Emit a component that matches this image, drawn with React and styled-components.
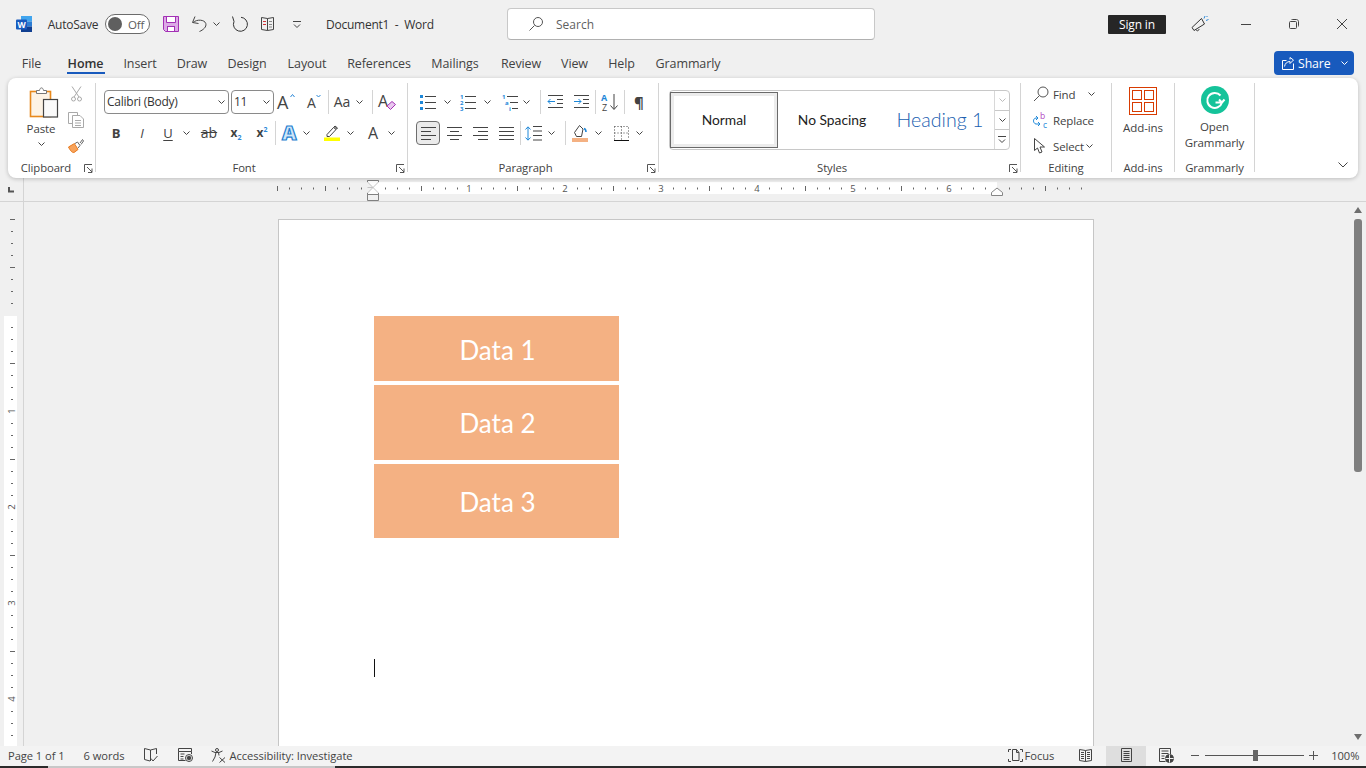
import styled, { createGlobalStyle } from "styled-components";

const GlobalStyle = createGlobalStyle`
  html, body {
    margin: 0;
    padding: 0;
    background: #f0f0f0;
    overflow: hidden;
  }
  * {
    box-sizing: border-box;
  }
  #root {
    font-family: "Open Sans", "Liberation Sans", sans-serif;
    color: #424242;
  }
`;

const Shell = styled.div`
  width: 1366px;
  height: 768px;
  display: flex;
  flex-direction: column;
  overflow: hidden;
  background: #f0f0f0;
`;

/* ---- title bar ---- */
const TitleBar = styled.div`
  height: 48px;
  flex: none;
  display: flex;
  align-items: center;
`;

const Slot = styled.div`
  flex: none;
  display: flex;
  align-items: center;
  justify-content: ${(p) => (p.$start ? "flex-start" : "center")};
  width: ${(p) => (p.$w ? `${p.$w}px` : "auto")};
  margin-left: ${(p) => p.$ml || 0}px;
`;

const BarText = styled.span`
  font-size: 12px;
  letter-spacing: -0.25px;
  white-space: pre;
  color: #333;
`;

const Toggle = styled.div`
  width: 45px;
  height: 20px;
  border: 1px solid #6b6b6b;
  border-radius: 10px;
  background: #fff;
  display: flex;
  align-items: center;
  padding: 0 2px;
  gap: 6px;
  font-size: 11.5px;
  letter-spacing: -0.2px;
  color: #5c5c5c;
  &::before {
    content: "";
    width: 14px;
    height: 14px;
    border-radius: 50%;
    background: #5f5f5f;
  }
`;

const SearchBox = styled.div`
  width: 368px;
  height: 32px;
  flex: none;
  background: #fff;
  border: 1px solid #c8c8c8;
  border-bottom-color: #b0b0b0;
  border-radius: 4px;
  display: flex;
  align-items: center;
  padding-left: 20px;
  gap: 12px;
  font-size: 12px;
  color: #5f5f5f;
`;

const RightCluster = styled.div`
  margin-left: auto;
  display: flex;
  align-items: center;
`;

const SignIn = styled.div`
  width: 58px;
  height: 19px;
  background: #262626;
  color: #fff;
  border-radius: 1px;
  font-size: 12px;
  letter-spacing: -0.15px;
  display: flex;
  align-items: center;
  justify-content: center;
`;

/* ---- tabs ---- */
const TabRow = styled.div`
  height: 30px;
  flex: none;
  display: flex;
  align-items: center;
  padding-left: 22px;
`;

const Tab = styled.div`
  position: relative;
  flex: none;
  height: 24px;
  width: ${(p) => p.$w}px;
  margin-right: ${(p) => p.$gap}px;
  display: flex;
  align-items: center;
  justify-content: center;
  white-space: nowrap;
  font-size: 12.5px;
  letter-spacing: -0.1px;
  color: ${(p) => (p.$active ? "#333" : "#424242")};
  font-weight: ${(p) => (p.$active ? 600 : 400)};
  &::after {
    content: "";
    display: ${(p) => (p.$active ? "block" : "none")};
    position: absolute;
    left: 0;
    right: -1px;
    bottom: 1px;
    height: 2px;
    background: #185abd;
  }
`;

const ShareBtn = styled.div`
  margin-left: auto;
  margin-right: 12px;
  width: 80px;
  height: 24px;
  border-radius: 4px;
  background: #185abd;
  color: #fff;
  font-size: 12.3px;
  display: flex;
  align-items: center;
  padding-left: 8px;
  gap: 4px;
  span {
    letter-spacing: -0.1px;
  }
  svg:last-child {
    margin-left: 6px;
  }
`;

/* ---- ribbon ---- */
const Ribbon = styled.div`
  position: relative;
  z-index: 2;
  flex: none;
  height: 100px;
  margin: 0 8px;
  padding: 5px 0 6px;
  display: flex;
  background: #fff;
  border-radius: 8px;
  box-shadow: 0 1px 4px rgba(0, 0, 0, 0.22);
`;

const Group = styled.div`
  width: ${(p) => p.$w}px;
  flex: none;
  display: flex;
  flex-direction: column;
  border-right: 1px solid #d4d4d4;
`;

const GroupBody = styled.div`
  flex: 1;
  min-height: 0;
  display: flex;
  flex-direction: column;
`;

const ToolRow = styled.div`
  display: flex;
  align-items: center;
  height: 24px;
  margin-top: ${(p) => p.$mt || 0}px;
  padding-left: ${(p) => p.$pl || 0}px;
`;

const Tool = styled.div`
  flex: none;
  width: ${(p) => p.$w}px;
  height: 24px;
  margin-left: ${(p) => p.$ml || 0}px;
  display: flex;
  align-items: center;
  justify-content: center;
  border-radius: 4px;
  border: ${(p) => (p.$on ? "1px solid #6e6e6e" : "none")};
  background: ${(p) => (p.$on ? "#ebebeb" : "transparent")};
`;

const Divider = styled.div`
  flex: none;
  width: 1px;
  height: 24px;
  margin-left: ${(p) => p.$ml || 0}px;
  background: #d4d4d4;
`;

const GroupFoot = styled.div`
  height: 14px;
  margin-bottom: -3px;
  display: flex;
  align-items: center;
`;

const GroupLabel = styled.div`
  flex: 1;
  text-align: center;
  font-size: 11.3px;
  letter-spacing: -0.1px;
  line-height: 14px;
  color: #424242;
  padding-right: ${(p) => p.$pr || 0}px;
`;

const LauncherBox = styled.div`
  flex: none;
  width: 9px;
  height: 9px;
  margin-right: 2px;
  display: flex;
`;

const Combo = styled.div`
  flex: none;
  width: ${(p) => p.$w}px;
  height: 24px;
  margin-left: ${(p) => p.$ml || 0}px;
  border: 1px solid #8a8a8a;
  border-radius: 4px;
  display: flex;
  align-items: center;
  justify-content: space-between;
  padding: 0 3px 1px 2px;
  font-size: 12px;
  letter-spacing: -0.25px;
  color: #333;
  white-space: nowrap;
`;

const Glyph = styled.span`
  font-family: ${(p) => p.$font || "inherit"};
  font-size: ${(p) => p.$size || 12}px;
  font-weight: ${(p) => p.$weight || 400};
  font-style: ${(p) => (p.$italic ? "italic" : "normal")};
  text-decoration: ${(p) => p.$deco || "none"};
  text-underline-offset: 2px;
  color: ${(p) => p.$color || "#424242"};
  line-height: 1;
  white-space: nowrap;
  sub, sup {
    font-size: 7px;
    color: #2b88d8;
    line-height: 0;
  }
`;

const ClipBody = styled.div`
  flex: 1;
  display: flex;
`;

const PasteCol = styled.div`
  width: 58px;
  flex: none;
  display: flex;
  flex-direction: column;
  align-items: center;
  padding: 4px 0 0 8px;
  font-size: 11.5px;
  letter-spacing: -0.1px;
  svg:first-child {
    margin-left: 5px;
  }
  span {
    margin-top: 3px;
    line-height: 16px;
  }
  svg:last-child {
    margin-top: 5px;
  }
`;

const SmallCol = styled.div`
  width: 20px;
  flex: none;
  display: flex;
  flex-direction: column;
  align-items: center;
  gap: 4px;
  div {
    height: 22px;
    display: flex;
    align-items: center;
  }
`;

const Gallery = styled.div`
  width: 341px;
  height: 60px;
  margin: 7px 0 0 10px;
  flex: none;
  display: flex;
  border: 1px solid #c8c8c8;
  border-radius: 4px;
`;

const StyleCell = styled.div`
  width: 108px;
  flex: none;
  height: ${(p) => (p.$on ? "56px" : "58px")};
  margin-top: ${(p) => (p.$on ? "1px" : "0")};
  padding-bottom: 2px;
  display: flex;
  align-items: center;
  justify-content: center;
  font-family: Lato, "Liberation Sans", sans-serif;
  font-size: ${(p) => p.$size || 13.8}px;
  font-weight: ${(p) => p.$weight || 400};
  color: ${(p) => p.$color || "#222"};
  border: ${(p) => (p.$on ? "1px solid #6a6a6a" : "none")};
  box-shadow: ${(p) => (p.$on ? "inset 0 0 0 3px #ececec" : "none")};
  white-space: nowrap;
`;

const GalleryArrows = styled.div`
  flex: 1;
  display: flex;
  flex-direction: column;
  border-left: 1px solid #d8d8d8;
`;

const ArrowCell = styled.div`
  flex: 1;
  display: flex;
  align-items: center;
  justify-content: center;
  & + & {
    border-top: 1px solid #c8c8c8;
  }
`;

const EditList = styled.div`
  display: flex;
  flex-direction: column;
  gap: 4px;
  padding-left: 12px;
`;

const EditRow = styled.div`
  height: 22px;
  display: flex;
  align-items: center;
  font-size: 11.5px;
  letter-spacing: -0.15px;
  span {
    margin-left: ${(p) => p.$gap || 4}px;
    margin-right: ${(p) => p.$after || 0}px;
  }
`;

const BigTool = styled.div`
  display: flex;
  flex-direction: column;
  align-items: center;
  padding-top: ${(p) => p.$pt || 4}px;
  font-size: 11.5px;
  letter-spacing: -0.1px;
  line-height: 16px;
  text-align: center;
  p {
    margin: 5px 0 0;
  }
`;

const Collapse = styled.div`
  margin: auto 10px 4px auto;
  display: flex;
`;

/* ---- rulers ---- */
const RulerRow = styled.div`
  height: 24px;
  flex: none;
  display: flex;
  border-bottom: 1px solid #d4d4d4;
`;

const RulerCorner = styled.div`
  width: 24px;
  flex: none;
  border-right: 1px solid #d4d4d4;
  display: flex;
  padding: 9px 0 0 8px;
`;

const Workspace = styled.div`
  flex: 1;
  min-height: 0;
  display: flex;
`;

const VRuler = styled.div`
  width: 24px;
  flex: none;
  border-right: 1px solid #d4d4d4;
  display: flex;
`;

const Canvas = styled.div`
  flex: 1;
  min-width: 0;
  overflow: hidden;
  display: flex;
  justify-content: center;
  padding-top: 17px;
`;

const Page = styled.div`
  width: 816px;
  height: 1056px;
  flex: none;
  margin-right: 2px;
  background: #fff;
  border: 1px solid #c6c6c6;
  padding: 96px 0 0 95px;
`;

const DataBlock = styled.div`
  width: 245px;
  height: ${(p) => p.$h}px;
  margin-bottom: 4px;
  padding: ${(p) => p.$pt}px 0 0 2px;
  background: #f4b183;
  color: #fff;
  display: flex;
  align-items: center;
  justify-content: center;
  font-family: Lato, "Liberation Sans", sans-serif;
  font-size: 26px;
`;

const Caret = styled.div`
  width: 1px;
  height: 18px;
  margin-top: 121px;
  background: #111;
`;

const ScrollTrack = styled.div`
  width: 16px;
  flex: none;
  display: flex;
  flex-direction: column;
  align-items: center;
  padding: 5px 0 6px;
`;

const ScrollThumb = styled.div`
  width: 8px;
  height: 253px;
  margin-top: 6px;
  background: #7f7f7f;
  border-radius: 3px;
`;

const ScrollEnd = styled.div`
  margin-top: ${(p) => (p.$bottom ? "auto" : 0)};
  width: 0;
  height: 0;
  border-left: 4.5px solid transparent;
  border-right: 4.5px solid transparent;
  border-bottom: ${(p) => (p.$bottom ? "0" : "6px solid #6e6e6e")};
  border-top: ${(p) => (p.$bottom ? "6px solid #6e6e6e" : "0")};
`;

/* ---- status bar ---- */
const StatusBar = styled.div`
  height: 20px;
  flex: none;
  background: #f3f3f3;
  display: flex;
  align-items: center;
  font-size: 11.15px;
  letter-spacing: -0.05px;
  color: #444;
`;

const StatusItem = styled.div`
  flex: none;
  height: 20px;
  padding-bottom: 2px;
  width: ${(p) => (p.$w ? `${p.$w}px` : "auto")};
  margin-left: ${(p) => p.$ml || 0}px;
  display: flex;
  align-items: center;
  justify-content: ${(p) => (p.$w ? "center" : "flex-start")};
  gap: ${(p) => p.$gap || 0}px;
  background: ${(p) => (p.$on ? "#dedede" : "transparent")};
  white-space: nowrap;
`;

const Slider = styled.div`
  position: relative;
  width: 99px;
  height: 1px;
  margin-left: 5px;
  background: #555;
  &::after {
    content: "";
    position: absolute;
    left: 48px;
    top: -5px;
    width: 5px;
    height: 11px;
    background: #666;
  }
`;

const BottomEdge = styled.div`
  height: 2px;
  flex: none;
  display: flex;
  background: #2b2b2b;
  &::before {
    content: "";
    width: 287px;
    margin-left: 48px;
    background: #c8c8c8;
  }
`;

/* ---- drawings ---- */
const Svg = styled.svg`
  display: block;
  flex: none;
  fill: none;
  overflow: visible;
  stroke: ${(p) => p.$stroke || "#444"};
  stroke-width: 1;
  text {
    stroke: none;
    font-family: "Open Sans", "Liberation Sans", sans-serif;
  }
`;

const Ico = ({ w = 16, h = 16, stroke, children }) => (
  <Svg width={w} height={h} viewBox={`0 0 ${w} ${h}`} $stroke={stroke}>
    {children}
  </Svg>
);

const Chev = ({ color }) => (
  <Ico w={7} h={4} stroke={color}>
    <path d="M.5.5 3.5 3.5 6.5.5" />
  </Ico>
);

const Launcher = () => (
  <LauncherBox>
    <Ico w={9} h={9} stroke="#555">
      <path d="M.5 8V.5H8M3 3l5 5M8 4.5V8.5H4" />
    </Ico>
  </LauncherBox>
);

const WordLogo = () => (
  <Ico w={16} h={16}>
    <rect x="5" y="0" width="11" height="5.5" fill="#41a5ee" stroke="none" />
    <rect x="5" y="5.5" width="11" height="5" fill="#2b7cd3" stroke="none" />
    <rect x="5" y="10.5" width="11" height="5.5" fill="#103f91" stroke="none" />
    <rect x="0" y="3.5" width="11" height="10" rx="1" fill="#185abd" stroke="none" />
    <text x="5.5" y="11.5" fontSize="8.5" fontWeight="700" fill="#fff" textAnchor="middle">W</text>
  </Ico>
);

const SaveIcon = () => (
  <Ico w={16} h={16} stroke="#a330b5">
    <path d="M.5.5H15.5V15.5H2.5L.5 13.5Z" fill="#dcaae6" />
    <rect x="4" y="1" width="8" height="5" fill="#fff" stroke="none" />
    <path d="M3.5.5V6.5H12.5V.5" />
    <rect x="4.5" y="10.5" width="7" height="5" fill="#fff" />
  </Ico>
);

const UndoIcon = () => (
  <Ico w={15} h={16}>
    <path d="M3 .5 .5 6.5 6.5 7.5M1 6.5C5 3 12.5 3.5 13.8 7.5 14.8 11 11 14 7.5 15.5" />
  </Ico>
);

const RedoIcon = () => (
  <Ico w={16} h={16}>
    <path d="M1.5.5 3 5.5M3 5.5A7 7 0 1 0 10 1.3" stroke="#333" />
  </Ico>
);

const BookIcon = () => (
  <Ico w={16} h={16}>
    <path d="M7.5 2.5 1.5 1.5V13.5L7.5 14.5 13.5 13.5V1.5ZM7.5 2.5V14.5" />
    <path d="M3 5.5h3M9 5.5h3M9 8.5h3M9 11h3" stroke="#888" />
    <path d="M3 5.5h3M3 8.5h3" stroke="#d13438" />
  </Ico>
);

const QatIcon = () => (
  <Ico w={8} h={7}>
    <path d="M0 .5h8M1 3.5l3 3 3-3" />
  </Ico>
);

const SearchIcon = () => (
  <Ico w={16} h={16} stroke="#555">
    <circle cx="10" cy="6" r="4.5" />
    <path d="M6.5 9.5 1.5 14.5" />
  </Ico>
);

const FeedbackIcon = () => (
  <Ico w={18} h={18}>
    <path d="M1 12.5 10.5 3.5 13.5 9 3 15.5ZM5 14.5c.5 2 3 1.5 3-.5" stroke="#333" />
    <path d="M14 1 13 3.5M15 5.5l2.5-1M16.5 1l-1 1" stroke="#2b88d8" />
  </Ico>
);

const RestoreIcon = () => (
  <Ico w={10} h={10}>
    <rect x=".5" y="2.5" width="7" height="7" rx="1" />
    <path d="M2.5 1c0-.5.5-.5 1-.5h4c1 0 2 1 2 2v4c0 .5 0 1-.5 1" />
  </Ico>
);

const ShareIcon = () => (
  <Ico w={12} h={13} stroke="#fff">
    <path d="M4.5 3.5H.5V12.5H11.5V6.5M2.5 9.5C3 6.5 5 4.5 8 4.5V6.5L11.5 3 8 .5V2.5" />
  </Ico>
);

const PasteIcon = () => (
  <Ico w={28} h={31}>
    <rect x=".5" y="4.5" width="20" height="25" fill="#fdf3e5" stroke="#e8891c" strokeWidth="1.6" />
    <path d="M6.5 6.5V3.5H9.5C10 0 13 0 13.5 3.5H16.5V6.5Z" fill="#fff" stroke="#777" />
    <rect x="13.5" y="12.5" width="14" height="17.5" fill="#fafafa" stroke="#444" strokeWidth="1.2" />
  </Ico>
);

const CutIcon = () => (
  <Ico w={11} h={16} stroke="#a9a9a9">
    <path d="M1 .5 8 11M10 .5 3 11" />
    <circle cx="2.5" cy="13" r="2" />
    <circle cx="8.5" cy="13" r="2" />
  </Ico>
);

const CopyIcon = () => (
  <Ico w={16} h={16} stroke="#a9a9a9">
    <path d="M9.5 3V.5H.5V11.5H4" />
    <path d="M4.5 3.5H12L15.5 7V15.5H4.5ZM7 8.5h6M7 11h6M7 13.5h6" fill="#fff" />
  </Ico>
);

const PainterIcon = () => (
  <Ico w={16} h={15}>
    <path d="M.5 8 6.5 4.5 10 10.5 6 13.5C4 14 2 11 .5 8Z" fill="#f7a35c" stroke="#e8791c" />
    <path d="M7 4.5 9.5 3 12 6.5 10 9M12 4 14.5.5 15.5 2 13 5.5" stroke="#666" fill="#fff" />
  </Ico>
);

const GrowIcon = () => (
  <Ico w={18} h={18} stroke="#2b88d8">
    <text x="-1" y="16" fontSize="18" fill="#444">A</text>
    <path d="M12.500 4 14.500 1.500 16.500 4" />
  </Ico>
);

const ShrinkIcon = () => (
  <Ico w={15} h={16} stroke="#2b88d8">
    <text x="0" y="14" fontSize="14" fill="#444">A</text>
    <path d="M9.500 1 11.500 3 13.500 1" />
  </Ico>
);

const ClearIcon = () => (
  <Ico w={17} h={17}>
    <text x="-1" y="13" fontSize="16" fill="#444">A</text>
    <path d="M8 12 13 7.500 16.500 10.500 11.500 15.500Z" stroke="#a330b5" fill="#e9c8ef" />
  </Ico>
);

const TextEffectIcon = () => (
  <Ico w={16} h={16}>
    <text x="1" y="15" fontSize="20" fontWeight="800" fill="#cfe6f8" style={{ stroke: "#1f7fd0", strokeWidth: 1.2 }}>A</text>
  </Ico>
);

const HighlightIcon = () => (
  <Ico w={16} h={16}>
    <path d="M3 9.500 9.500 2.500 12 4.500 5.500 11.500H3Z" />
    <path d="M9.500 2.500 11 1l2.500 2L12 4.500" fill="#888" />
    <rect x="0" y="12.500" width="16" height="3.500" fill="#ffff00" stroke="none" />
  </Ico>
);

const BulletsIcon = () => (
  <Ico>
    <path d="M0 1h3v3H0zM0 7h3v3H0zM0 13h3v3H0z" fill="#1e88d9" stroke="none" />
    <path d="M5 2.500h11M5 8.500h11M5 14.500h11" />
  </Ico>
);

const NumberingIcon = () => (
  <Ico>
    <text x="0" y="5" fontSize="6" fontWeight="700" fill="#1e88d9">1</text>
    <text x="0" y="11" fontSize="6" fontWeight="700" fill="#1e88d9">2</text>
    <text x="0" y="16.500" fontSize="6" fontWeight="700" fill="#1e88d9">3</text>
    <path d="M5 2.500h11M5 8.500h11M5 14.500h11" />
  </Ico>
);

const MultiLevelIcon = () => (
  <Ico>
    <text x="0" y="5" fontSize="6" fontWeight="700" fill="#1e88d9">1</text>
    <text x="3" y="11" fontSize="6" fontWeight="700" fill="#1e88d9">a</text>
    <text x="7" y="16.500" fontSize="6" fontWeight="700" fill="#1e88d9">i</text>
    <path d="M5 2.500h11M8 8.500h8M10 14.500h6" />
  </Ico>
);

const OutdentIcon = () => (
  <Ico w={16} h={14}>
    <path d="M1 .5h15M10 4.500h6M10 8.500h6M1 12.500h15" />
    <path d="M8 6.500H1M3.500 4 1 6.500 3.500 9" stroke="#1e88d9" />
  </Ico>
);

const IndentIcon = () => (
  <Ico w={16} h={14}>
    <path d="M1 .5h15M10 4.500h6M10 8.500h6M1 12.500h15" />
    <path d="M1 6.500h7M5.500 4 8 6.500 5.500 9" stroke="#1e88d9" />
  </Ico>
);

const SortIcon = () => (
  <Ico w={18} h={18}>
    <text x="0" y="8" fontSize="9" fontWeight="700" fill="#1e88d9">A</text>
    <text x="1" y="17.500" fontSize="9" fill="#444">Z</text>
    <path d="M13 1v15M9.500 12.500 13 16.500 16.500 12.500" />
  </Ico>
);

const AlignIcon = ({ kind }) => {
  const paths = {
    left: "M0 .5h15M0 4.500h10M0 8.500h15M0 12.500h10",
    center: "M0 .5h15M3 4.500h9M0 8.500h15M3 12.500h9",
    right: "M0 .5h15M5 4.500h10M0 8.500h15M5 12.500h10",
    justify: "M0 .5h15M0 4.500h15M0 8.500h15M0 12.500h15",
  };
  return (
    <Ico w={15} h={13}>
      <path d={paths[kind]} />
    </Ico>
  );
};

const LineSpacingIcon = () => (
  <Ico w={17} h={15}>
    <path d="M3 1v13M.5 3.500 3 .8 5.500 3.500M.5 11.500 3 14.200 5.500 11.500" stroke="#1e88d9" />
    <path d="M8 .5h9M8 5h9M8 9.500h9M8 14h9" />
  </Ico>
);

const ShadingIcon = () => (
  <Ico w={16} h={18}>
    <path d="M2.500 8.500 7.500 1.500 11 5 9.500 12.500H4.500Z" />
    <path d="M12 4.500c1.500.5 2 1.500 2 3.500" stroke="#1e88d9" strokeWidth="1.600" />
    <rect x="0" y="14" width="16" height="4" fill="#f4b183" stroke="none" />
  </Ico>
);

const BordersIcon = () => (
  <Ico w={15} h={15}>
    <path d="M.5.5h14v13M.5.5v13M7.500.5v13M.5 7h14" strokeDasharray="1 2" />
    <path d="M0 14.500h15" stroke="#111" />
  </Ico>
);

const FindIcon = () => (
  <Ico w={16} h={16} stroke="#555">
    <circle cx="10" cy="6" r="5" />
    <path d="M6.500 9.500 1 15" />
  </Ico>
);

const ReplaceIcon = () => (
  <Ico w={16} h={17}>
    <text x="7" y="7" fontSize="8.500" fill="#b146c2">b</text>
    <text x="10" y="16" fontSize="8.500" fill="#1e88d9">c</text>
    <path d="M5 6H3C1 6 .5 8 .5 9S1.500 12 3 12H7M5 10l2 2-2 2M3 4 5 6 3 8" stroke="#1e88d9" />
  </Ico>
);

const SelectIcon = () => (
  <Ico w={13} h={16}>
    <path d="M1.500.5V12.500L4.500 10 6.500 15 9 14 7 9H11.500Z" />
  </Ico>
);

const AddinsIcon = () => (
  <Ico w={28} h={28} stroke="#d83b01">
    <rect x=".5" y=".5" width="27" height="27" />
    <rect x="3.500" y="3.500" width="9" height="9" />
    <rect x="15.500" y="3.500" width="9" height="9" />
    <rect x="3.500" y="15.500" width="9" height="9" />
    <rect x="15.500" y="15.500" width="9" height="9" />
  </Ico>
);

const GrammarlyIcon = () => (
  <Ico w={28} h={28} stroke="#fff">
    <circle cx="14" cy="14" r="14" fill="#15c39a" stroke="none" />
    <path d="M19.500 9.500A7.500 7.500 0 1 0 21 16.500H14.500M18 13.500l3 3 2.500-3" strokeWidth="2" />
  </Ico>
);

const ProofIcon = () => (
  <Ico w={14} h={14}>
    <path d="M6.500 13V2L.5.5V11.500L6 13M6.500 2 12.500.5V6" />
    <path d="M7 10.500 9 13 13.500 8" />
  </Ico>
);

const MacroIcon = () => (
  <Ico w={15} h={14}>
    <path d="M.5.500h13v3H.5zM.5 3.500v9h7M13.500 3.500V6M2.500 6h4M2.500 8.500h3M2.500 11h3" />
    <circle cx="11" cy="10" r="3.500" />
    <circle cx="11" cy="10" r="1.800" fill="#444" />
  </Ico>
);

const AccessIcon = () => (
  <Ico w={15} h={15}>
    <circle cx="6" cy="2" r="1.500" />
    <path d="M.5 3 4 4.500H8L11.500 3M5 4.500 4 9 1.500 13.500M7.500 4.500 8 7.500" />
    <path d="M8.500 9.500 14 14.500M14 9.500 8.500 14.500" />
  </Ico>
);

const FocusIcon = () => (
  <Ico w={15} h={15}>
    <path d="M.5 4V1.500h2.500M12 1.500h2.500V4M.5 11v2.500h2.500M12 13.500h2.500V11" />
    <path d="M4.500 1.500h4l2.500 3v8h-6.500ZM8.500 1.500v3h2.500" />
  </Ico>
);

const ReadIcon = () => (
  <Ico w={14} h={13}>
    <path d="M6.500 1.500 .5.500V11.500L6.500 12.500 12.500 11.500V.5ZM6.500 1.500V12.500" />
    <path d="M2 3.500h3M2 5.500h3M2 7.500h3M2 9.500h3M8 3.500h3M8 5.500h3M8 7.500h3M8 9.500h3" />
  </Ico>
);

const PrintIcon = () => (
  <Ico w={11} h={14}>
    <path d="M.5.500h10v13H.5zM2.500 3.500h6M2.500 5.500h6M2.500 7.500h6M2.500 9.500h6M2.500 11.500h6" />
  </Ico>
);

const WebIcon = () => (
  <Ico w={15} h={15}>
    <path d="M6.500 13.500H.5V.5H11.500V6M2.500 3h7M2.500 5.500h7M2.500 8h3M2.500 10.500h3" />
    <circle cx="10.500" cy="10.500" r="4" fill="#444" />
    <path d="M6.500 10.500h8M10.500 6.500v8" stroke="#f3f3f3" />
  </Ico>
);

const ZoomSign = ({ plus }) => (
  <Ico w={9} h={9} stroke="#555">
    <path d={plus ? "M0 4.500h9M4.500 0v9" : "M0 4.500h8"} />
  </Ico>
);

const HRuler = () => {
  const ticks = [];
  for (let x = 277; x <= 1081; x += 12) {
    const inch = (x - 373) / 96;
    const whole = Number.isInteger(inch);
    const half = Number.isInteger(inch * 2);
    if (x === 373 || x === 997) continue;
    if (whole && inch >= 1 && inch <= 6) {
      ticks.push(
        <text key={x} x={x - 24} y="13.500" fontSize="9.500" fill="#555" textAnchor="middle">{inch}</text>
      );
    } else {
      ticks.push(<path key={x} d={half || x === 277 ? `M${x - 23.5} 8v5` : `M${x - 23.5} 9.500v2`} stroke="#666" />);
    }
  }
  return (
    <Ico w={1342} h={23}>
      <rect x="349" y="4" width="624" height="12" fill="#fff" stroke="none" />
      {ticks}
      <path d="M343.500 9.500 349 9.500M343.500 2.500h11v1.500l-11 11v1.500h11v-1.500l-11-11Z" fill="#fdfdfd" stroke="#c4c4c4" />
      <path d="M343.500 4V2.500h11V4M343.500 15V16.500h11V15M343.500 16.500h11v6h-11Z" stroke="#808080" />
      <path d="M967.500 17.500v-3l5.500-4.500 5.500 4.500v3Z" fill="#fdfdfd" stroke="#858585" />
    </Ico>
  );
};

const VerticalRuler = () => {
  const ticks = [];
  for (let y = 219; y <= 740; y += 12) {
    const inch = (y - 315) / 96;
    const whole = Number.isInteger(inch);
    const half = Number.isInteger(inch * 2);
    const top = y - 202;
    if (y === 315) continue;
    if (whole && inch >= 1) {
      ticks.push(
        <text key={y} x="0" y="0" fontSize="9.500" fill="#555" textAnchor="middle" transform={`translate(14.500 ${top}) rotate(-90)`}>{inch}</text>
      );
    } else {
      ticks.push(<path key={y} d={half ? `M10 ${top + 0.5}h5` : `M11 ${top + 0.5}h2`} stroke="#666" />);
    }
  }
  return (
    <Ico w={23} h={544}>
      <rect x="4" y="114" width="13" height="430" fill="#fff" stroke="none" />
      {ticks}
    </Ico>
  );
};

const TABS = [
  ["File", 19, 26],
  ["Home", 37, 20, true],
  ["Insert", 32, 21],
  ["Draw", 30, 20],
  ["Design", 40, 21],
  ["Layout", 38, 21],
  ["References", 64, 20],
  ["Mailings", 48, 22],
  ["Review", 40, 20],
  ["View", 27, 20],
  ["Help", 27, 21],
  ["Grammarly", 64, 0],
];

export default function App() {
  return (
    <Shell>
      <GlobalStyle />
      <TitleBar>
        <Slot $ml={16}><WordLogo /></Slot>
        <Slot $ml={16} $w={50}><BarText>AutoSave</BarText></Slot>
        <Slot $ml={7}><Toggle>Off</Toggle></Slot>
        <Slot $ml={13}><SaveIcon /></Slot>
        <Slot $ml={13}><UndoIcon /></Slot>
        <Slot $ml={6}><Chev /></Slot>
        <Slot $ml={11}><RedoIcon /></Slot>
        <Slot $ml={13}><BookIcon /></Slot>
        <Slot $ml={17}><QatIcon /></Slot>
        <Slot $ml={25} $w={181} $start>
          <BarText>Document1  -  Word</BarText>
        </Slot>
        <SearchBox>
          <SearchIcon />
          <span>Search</span>
        </SearchBox>
        <RightCluster>
          <SignIn>Sign in</SignIn>
          <Slot $ml={12} $w={44}><FeedbackIcon /></Slot>
          <Slot $w={48}>
            <Ico w={10} h={1}><path d="M0 .5h10" /></Ico>
          </Slot>
          <Slot $w={48}><RestoreIcon /></Slot>
          <Slot $w={48}>
            <Ico w={10} h={10}><path d="M0 0 10 10M10 0 0 10" /></Ico>
          </Slot>
        </RightCluster>
      </TitleBar>

      <TabRow>
        {TABS.map(([name, w, gap, active]) => (
          <Tab key={name} $w={w} $gap={gap} $active={active}>{name}</Tab>
        ))}
        <ShareBtn>
          <ShareIcon />
          <span>Share</span>
          <Chev color="#fff" />
        </ShareBtn>
      </TabRow>

      <Ribbon>
        <Group $w={88}>
          <ClipBody>
            <PasteCol>
              <PasteIcon />
              <span>Paste</span>
              <Chev />
            </PasteCol>
            <SmallCol>
              <div><CutIcon /></div>
              <div><CopyIcon /></div>
              <div><PainterIcon /></div>
            </SmallCol>
          </ClipBody>
          <GroupFoot>
            <GroupLabel>Clipboard</GroupLabel>
            <Launcher />
          </GroupFoot>
        </Group>

        <Group $w={312}>
          <GroupBody>
            <ToolRow $mt={7} $pl={8}>
              <Combo $w={125}>Calibri (Body)<Chev /></Combo>
              <Combo $w={43} $ml={2}>11<Chev /></Combo>
              <Tool $w={26}><GrowIcon /></Tool>
              <Tool $w={28}><ShrinkIcon /></Tool>
              <Divider />
              <Tool $w={26}><Glyph $size={14}>Aa</Glyph></Tool>
              <Tool $w={8}><Chev /></Tool>
              <Divider $ml={9} />
              <Tool $w={28}><ClearIcon /></Tool>
            </ToolRow>
            <ToolRow $mt={7} $pl={8}>
              <Tool $w={24}><Glyph $weight={700} $size={13}>B</Glyph></Tool>
              <Tool $w={26} $ml={1}><Glyph $italic $size={13}>I</Glyph></Tool>
              <Tool $w={26}><Glyph $deco="underline" $size={13}>U</Glyph></Tool>
              <Tool $w={10}><Chev /></Tool>
              <Tool $w={26} $ml={5}><Glyph $deco="line-through" $size={14}>ab</Glyph></Tool>
              <Tool $w={26} $ml={1}><Glyph $weight={700}>x<sub>2</sub></Glyph></Tool>
              <Tool $w={26}><Glyph $weight={700}>x<sup>2</sup></Glyph></Tool>
              <Divider />
              <Tool $w={26}><TextEffectIcon /></Tool>
              <Tool $w={6} $ml={1}><Chev /></Tool>
              <Tool $w={26} $ml={10}><HighlightIcon /></Tool>
              <Tool $w={10}><Chev /></Tool>
              <Tool $w={26} $ml={5}><Glyph $size={16}>A</Glyph></Tool>
              <Tool $w={10}><Chev /></Tool>
            </ToolRow>
          </GroupBody>
          <GroupFoot>
            <GroupLabel $pr={4}>Font</GroupLabel>
            <Launcher />
          </GroupFoot>
        </Group>

        <Group $w={251}>
          <GroupBody>
            <ToolRow $mt={7} $pl={8}>
              <Tool $w={24}><BulletsIcon /></Tool>
              <Tool $w={14}><Chev /></Tool>
              <Tool $w={24} $ml={2}><NumberingIcon /></Tool>
              <Tool $w={14}><Chev /></Tool>
              <Tool $w={24} $ml={4}><MultiLevelIcon /></Tool>
              <Tool $w={8}><Chev /></Tool>
              <Divider $ml={10} />
              <Tool $w={26} $ml={1}><OutdentIcon /></Tool>
              <Tool $w={26}><IndentIcon /></Tool>
              <Divider $ml={1} />
              <Tool $w={28}><SortIcon /></Tool>
              <Divider />
              <Tool $w={28}><Glyph $size={15} $weight={700}>¶</Glyph></Tool>
            </ToolRow>
            <ToolRow $mt={7} $pl={8}>
              <Tool $w={24} $on><AlignIcon kind="left" /></Tool>
              <Tool $w={26} $ml={1}><AlignIcon kind="center" /></Tool>
              <Tool $w={26}><AlignIcon kind="right" /></Tool>
              <Tool $w={26}><AlignIcon kind="justify" /></Tool>
              <Divider $ml={1} />
              <Tool $w={24}><LineSpacingIcon /></Tool>
              <Tool $w={12}><Chev /></Tool>
              <Divider $ml={8} />
              <Tool $w={28}><ShadingIcon /></Tool>
              <Tool $w={8}><Chev /></Tool>
              <Tool $w={26} $ml={6}><BordersIcon /></Tool>
              <Tool $w={10}><Chev /></Tool>
            </ToolRow>
          </GroupBody>
          <GroupFoot>
            <GroupLabel $pr={4}>Paragraph</GroupLabel>
            <Launcher />
          </GroupFoot>
        </Group>

        <Group $w={362}>
          <GroupBody>
            <Gallery>
              <StyleCell $on>Normal</StyleCell>
              <StyleCell>No Spacing</StyleCell>
              <StyleCell $size={19.6} $weight={300} $color="#2060b0">Heading 1</StyleCell>
              <GalleryArrows>
                <ArrowCell><Chev color="#bbb" /></ArrowCell>
                <ArrowCell><Chev /></ArrowCell>
                <ArrowCell><QatIcon /></ArrowCell>
              </GalleryArrows>
            </Gallery>
          </GroupBody>
          <GroupFoot>
            <GroupLabel $pr={4}>Styles</GroupLabel>
            <Launcher />
          </GroupFoot>
        </Group>

        <Group $w={91}>
          <GroupBody>
            <EditList>
              <EditRow $after={13}><FindIcon /><span>Find</span><Chev /></EditRow>
              <EditRow><ReplaceIcon /><span>Replace</span></EditRow>
              <EditRow $gap={7} $after={2}><SelectIcon /><span>Select</span><Chev /></EditRow>
            </EditList>
          </GroupBody>
          <GroupFoot>
            <GroupLabel>Editing</GroupLabel>
          </GroupFoot>
        </Group>

        <Group $w={63}>
          <GroupBody>
            <BigTool>
              <AddinsIcon />
              <p>Add-ins</p>
            </BigTool>
          </GroupBody>
          <GroupFoot>
            <GroupLabel>Add-ins</GroupLabel>
          </GroupFoot>
        </Group>

        <Group $w={80}>
          <GroupBody>
            <BigTool $pt={3}>
              <GrammarlyIcon />
              <p>Open<br />Grammarly</p>
            </BigTool>
          </GroupBody>
          <GroupFoot>
            <GroupLabel>Grammarly</GroupLabel>
          </GroupFoot>
        </Group>

        <Collapse>
          <Ico w={10} h={6}><path d="M.5.500 5 5 9.500.5" /></Ico>
        </Collapse>
      </Ribbon>

      <RulerRow>
        <RulerCorner>
          <Ico w={6} h={5} stroke="#555"><path d="M1 0v4.500h5" strokeWidth="2" /></Ico>
        </RulerCorner>
        <HRuler />
      </RulerRow>

      <Workspace>
        <VRuler><VerticalRuler /></VRuler>
        <Canvas>
          <Page>
            <DataBlock $h={65} $pt={3}>Data 1</DataBlock>
            <DataBlock $h={75} $pt={1}>Data 2</DataBlock>
            <DataBlock $h={74} $pt={1}>Data 3</DataBlock>
            <Caret />
          </Page>
        </Canvas>
        <ScrollTrack>
          <ScrollEnd />
          <ScrollThumb />
          <ScrollEnd $bottom />
        </ScrollTrack>
      </Workspace>

      <StatusBar>
        <StatusItem $ml={8}>Page 1 of 1</StatusItem>
        <StatusItem $ml={19}>6 words</StatusItem>
        <StatusItem $ml={20}><ProofIcon /></StatusItem>
        <StatusItem $ml={20}><MacroIcon /></StatusItem>
        <StatusItem $ml={18} $gap={3}><AccessIcon />Accessibility: Investigate</StatusItem>
        <StatusItem $ml={655} $gap={2}><FocusIcon />Focus</StatusItem>
        <StatusItem $ml={25}><ReadIcon /></StatusItem>
        <StatusItem $ml={13} $w={40} $on><PrintIcon /></StatusItem>
        <StatusItem $ml={13}><WebIcon /></StatusItem>
        <StatusItem $ml={17}><ZoomSign /></StatusItem>
        <StatusItem><Slider /></StatusItem>
        <StatusItem $ml={5}><ZoomSign plus /></StatusItem>
        <StatusItem $ml={13}>100%</StatusItem>
      </StatusBar>
      <BottomEdge />
    </Shell>
  );
}
